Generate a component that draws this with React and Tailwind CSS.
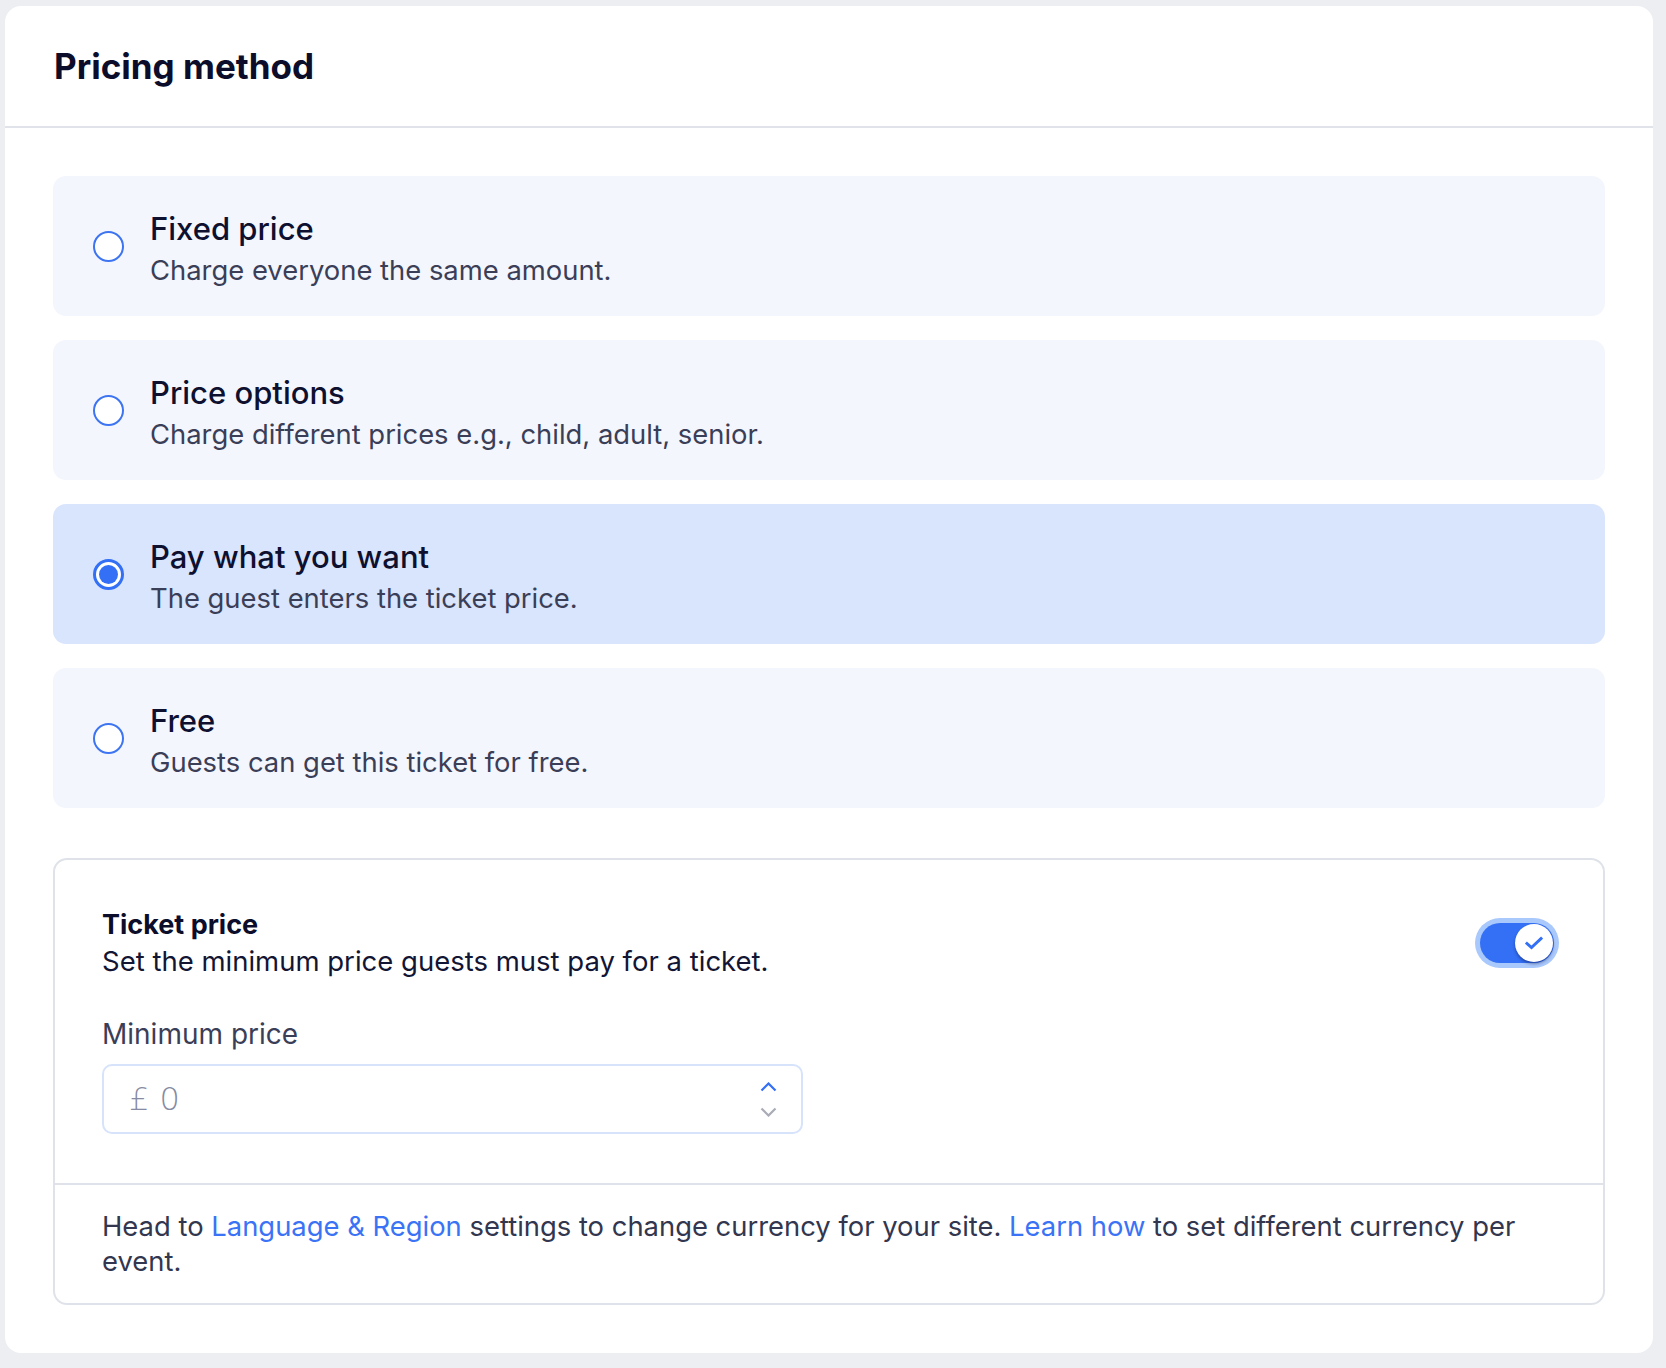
import React from "react";

const options = [
  { title: "Fixed price", sub: "Charge everyone the same amount.", selected: false },
  { title: "Price options", sub: "Charge different prices e.g., child, adult, senior.", selected: false },
  { title: "Pay what you want", sub: "The guest enters the ticket price.", selected: true },
  { title: "Free", sub: "Guests can get this ticket for free.", selected: false },
];

function Radio({ selected }) {
  if (selected) {
    return (
      <div className="w-[31px] h-[31px] shrink-0 rounded-full border-[3px] border-[#3370f5] bg-white flex items-center justify-center">
        <div className="w-[19px] h-[19px] rounded-full bg-[#3370f5]" />
      </div>
    );
  }
  return <div className="w-[31px] h-[31px] shrink-0 rounded-full border-[2.5px] border-[#3d74f2] bg-white" />;
}

function Option({ title, sub, selected }) {
  return (
    <div
      className={`h-[140px] rounded-[13px] flex items-center pl-[40px] gap-[26px] ${
        selected ? "bg-[#d9e5fc]" : "bg-[#f3f6fd]"
      }`}
    >
      <Radio selected={selected} />
      <div className="flex flex-col pt-[8px]">
        <div className="text-[31px] leading-[40px] font-medium text-[#0e1030]">{title}</div>
        <div className="text-[27.4px] leading-[42px] text-[#3b3e57]">{sub}</div>
      </div>
    </div>
  );
}

function Toggle() {
  return (
    <div className="mr-[2px] w-[74px] h-[40px] rounded-full bg-[#3370f5] shadow-[0_0_0_5px_#a9c8fb] flex items-center justify-end pr-[1px]">
      <div className="w-[38px] h-[38px] rounded-full bg-white shadow-[0_2px_3px_rgba(10,20,80,0.45)] flex items-center justify-center">
        <svg width="18" height="14" viewBox="0 0 18 14" fill="none">
          <path d="M2 7.5 L6.5 11.5 L16 2.5" stroke="#3370f5" strokeWidth="3" strokeLinecap="square" strokeLinejoin="miter" />
        </svg>
      </div>
    </div>
  );
}

export default function App() {
  return (
    <div
      className="min-h-screen bg-[#eceef2] pt-[6px] pl-[5px] pb-[15px]"
      style={{ fontFamily: "Inter, 'Noto Sans', sans-serif" }}
    >
      <div className="w-[1648px] bg-white rounded-[16px]">
        <div className="h-[122px] flex items-center px-[49px] border-b-2 border-[#e0e4ea]">
          <h1 className="text-[35px] font-bold text-[#0b0d2a]">Pricing method</h1>
        </div>
        <div className="px-[48px] pt-[48px] pb-[48px]">
          <div className="flex flex-col gap-[24px]">
            {options.map((o) => (
              <Option key={o.title} {...o} />
            ))}
          </div>
          <div className="mt-[50px] border-2 border-[#dfe3e9] rounded-[14px]">
            <div className="px-[47px] pt-[47px] pb-[49px]">
              <div className="flex items-center justify-between">
                <div>
                  <div className="text-[27px] leading-[36px] font-bold text-[#0b0d2a]">Ticket price</div>
                  <div className="text-[27.5px] leading-[36px] text-[#121533]">
                    Set the minimum price guests must pay for a ticket.
                  </div>
                </div>
                <Toggle />
              </div>
              <div className="mt-[37px] text-[28px] leading-[36px] text-[#3b3e57]">Minimum price</div>
              <div className="mt-[12px] w-[701px] h-[70px] border-2 border-[#d6e3fb] rounded-[10px] flex items-center justify-between pl-[25px] pr-[24px]">
                <span className="text-[32px] text-[#868aa2]" style={{ fontFamily: "'DejaVu Sans', sans-serif", fontWeight: 300 }}>
                  £ 0
                </span>
                <div className="flex flex-col items-center gap-[15px]">
                  <svg width="17" height="10" viewBox="0 0 17 10" fill="none">
                    <path d="M1.5 8.5 L8.5 1.5 L15.5 8.5" stroke="#3370f5" strokeWidth="2.2" />
                  </svg>
                  <svg width="17" height="10" viewBox="0 0 17 10" fill="none">
                    <path d="M1.5 1.5 L8.5 8.5 L15.5 1.5" stroke="#a9acb6" strokeWidth="2.2" />
                  </svg>
                </div>
              </div>
            </div>
            <div className="border-t-2 border-[#dfe3e9] px-[47px] pt-[24px] pb-[24px] text-[27.4px] leading-[35px] text-[#32364e]">
              <span>Head to </span>
              <span className="text-[#3a73f5]">Language &amp; Region</span>
              <span> settings to change currency for your site. </span>
              <span className="text-[#3a73f5]">Learn how</span>
              <span> to set different currency per </span>
              <span>event.</span>
            </div>
          </div>
        </div>
      </div>
    </div>
  );
}
